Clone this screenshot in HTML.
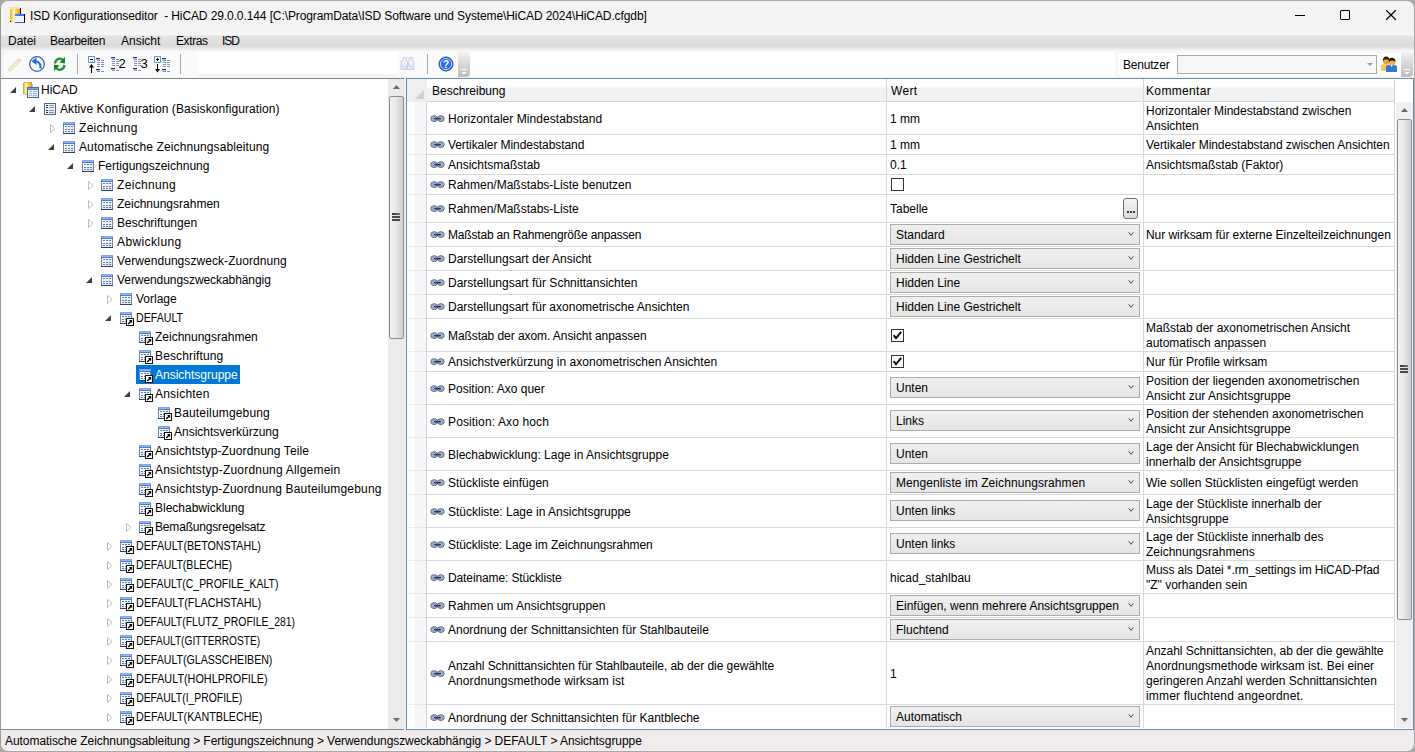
<!DOCTYPE html>
<html><head><meta charset="utf-8">
<style>
*{box-sizing:border-box;margin:0;padding:0}
html,body{width:1415px;height:752px;overflow:hidden;background:#a8a8a8}
body{font-family:"Liberation Sans",sans-serif;font-size:12px;color:#000;position:relative}
.a{position:absolute;display:block}
.t{position:absolute;white-space:nowrap;line-height:15px}
</style></head><body>
<svg width="0" height="0" style="position:absolute">
<defs>
 <linearGradient id="gTbl" x1="0" y1="0" x2="1" y2="1"><stop offset="0" stop-color="#ffffff"/><stop offset="1" stop-color="#d6e2f6"/></linearGradient>
 <linearGradient id="gHead" x1="0" y1="0" x2="0" y2="1"><stop offset="0" stop-color="#8db4f2"/><stop offset="1" stop-color="#3d6fd0"/></linearGradient>
 <linearGradient id="gCyl" x1="0" y1="0" x2="1" y2="0"><stop offset="0" stop-color="#e8b020"/><stop offset="0.35" stop-color="#fff2b0"/><stop offset="1" stop-color="#e49a00"/></linearGradient>
 <symbol id="tri-e" viewBox="0 0 6 6"><path d="M6 0 L6 6 L0 6 Z" fill="#404040" shape-rendering="geometricPrecision"/></symbol>
 <symbol id="tri-c" viewBox="0 0 6 9"><path d="M0.5 0.5 L5 4.5 L0.5 8.5 Z" fill="#fff" stroke="#b4b4b4" stroke-width="0.9" shape-rendering="geometricPrecision"/></symbol>
 <symbol id="ic-tbl" viewBox="0 0 15 15" shape-rendering="crispEdges">
  <rect x="0" y="0" width="12" height="12" fill="#6f86ae"/>
  <rect x="1" y="3" width="10" height="8" fill="url(#gTbl)"/>
  <rect x="0" y="0" width="12" height="3" fill="url(#gHead)"/>
  <rect x="1" y="1" width="10" height="1" fill="#9cc0f6" opacity="0.8"/>
  <rect x="0" y="11" width="12" height="1" fill="#2f4068"/>
  <g fill="#6a7a98"><rect x="2" y="4" width="2" height="1"/><rect x="5" y="4" width="2" height="1"/><rect x="8" y="4" width="2" height="1"/>
  <rect x="2" y="7" width="2" height="1"/><rect x="5" y="7" width="2" height="1"/><rect x="8" y="7" width="2" height="1"/>
  <rect x="2" y="9" width="2" height="1"/><rect x="5" y="9" width="2" height="1"/><rect x="8" y="9" width="2" height="1"/></g>
 </symbol>
 <symbol id="ic-lnk" viewBox="0 0 15 15" shape-rendering="crispEdges">
  <rect x="0" y="0" width="12" height="12" fill="#6f86ae"/>
  <rect x="1" y="3" width="10" height="8" fill="url(#gTbl)"/>
  <rect x="0" y="0" width="12" height="3" fill="url(#gHead)"/>
  <rect x="1" y="1" width="10" height="1" fill="#9cc0f6" opacity="0.8"/>
  <rect x="0" y="11" width="12" height="1" fill="#2f4068"/>
  <g fill="#6a7a98"><rect x="2" y="4" width="2" height="1"/><rect x="5" y="4" width="2" height="1"/><rect x="8" y="4" width="2" height="1"/>
  <rect x="2" y="7" width="2" height="1"/><rect x="5" y="7" width="2" height="1"/>
  <rect x="2" y="9" width="2" height="1"/><rect x="5" y="9" width="2" height="1"/></g>
  <rect x="6.5" y="6.5" width="7" height="7" rx="1" fill="#fff" stroke="#111"/>
  <path d="M8.2 12 L11 9.2" stroke="#000" stroke-width="1.4" fill="none" shape-rendering="geometricPrecision"/>
  <path d="M9 8 L12.2 8 L12.2 11.2 Z" fill="#000" shape-rendering="geometricPrecision"/>
 </symbol>
 <symbol id="ic-list" viewBox="0 0 15 15" shape-rendering="crispEdges">
  <rect x="0.5" y="0.5" width="11" height="11" fill="url(#gTbl)" stroke="#50678f"/>
  <g fill="#333"><rect x="2" y="2" width="2" height="1"/><rect x="2" y="4" width="2" height="1"/><rect x="2" y="7" width="2" height="1"/><rect x="2" y="9" width="2" height="1"/></g>
  <g fill="#8a8f99"><rect x="5" y="2" width="5" height="1"/><rect x="5" y="4" width="5" height="1"/><rect x="5" y="7" width="5" height="1"/><rect x="5" y="9" width="5" height="1"/></g>
 </symbol>
 <symbol id="ic-hicad" viewBox="0 0 17 17" shape-rendering="crispEdges">
  <rect x="0" y="0" width="9" height="12" rx="2" fill="url(#gCyl)" stroke="#c49a40" stroke-width="0.6"/>
  <rect x="4.5" y="5.5" width="11" height="10" fill="url(#gTbl)" stroke="#50678f"/>
  <rect x="5" y="6" width="10" height="2" fill="url(#gHead)"/>
  <g fill="#9db4e8"><rect x="6" y="9" width="3" height="1"/><rect x="10" y="9" width="4" height="1"/><rect x="6" y="11" width="3" height="1"/><rect x="10" y="11" width="4" height="1"/><rect x="6" y="13" width="3" height="1"/><rect x="10" y="13" width="4" height="1"/></g>
 </symbol>
 <symbol id="ic-link" viewBox="0 0 16 8">
  <g shape-rendering="geometricPrecision">
   <ellipse cx="4.2" cy="3.6" rx="3.4" ry="2.9" fill="#b7c5dc" stroke="#42577e" stroke-width="0.9"/>
   <ellipse cx="10.8" cy="3.6" rx="3.4" ry="2.9" fill="#b7c5dc" stroke="#42577e" stroke-width="0.9"/>
   <ellipse cx="4.4" cy="3.6" rx="1.8" ry="1.3" fill="#ffffff" stroke="#42577e" stroke-width="0.6"/>
   <ellipse cx="10.6" cy="3.6" rx="1.8" ry="1.3" fill="#ffffff" stroke="#42577e" stroke-width="0.6"/>
   <path d="M3.8 3.7 H11.2" stroke="#17274a" stroke-width="1.2"/>
  </g>
 </symbol>
 <symbol id="chev" viewBox="0 0 6 6"><path d="M0.7 1.3 L3 4.3 L5.3 1.3" fill="none" stroke="#4a4a4a" stroke-width="1.0" shape-rendering="geometricPrecision"/></symbol>
 <symbol id="check" viewBox="0 0 13 13"><path d="M2.6 6.2 L5 9.2 L10.2 2.8" fill="none" stroke="#111" stroke-width="2" shape-rendering="geometricPrecision"/></symbol>
</defs></svg>

<!-- window base -->
<div class="a" style="left:1px;top:1px;width:1413px;height:750px;background:#f3f3f3;border-radius:7px"></div>
<div class="a" style="left:0px;top:8px;width:1px;height:736px;background:#9a9a9a"></div>
<!-- title -->
<svg class="a" style="left:8px;top:5px" width="20" height="20" viewBox="0 0 20 20">
  <rect x="2" y="2" width="10" height="15" fill="url(#gCyl)"/>
  <rect x="2" y="2" width="10" height="2" fill="#f6e7a6"/>
  <rect x="5" y="4" width="2" height="12" fill="#fbf1b8" opacity="0.8"/>
  <rect x="12" y="3" width="1" height="6" fill="#111"/>
  <rect x="2" y="16" width="1" height="1" fill="#111"/>
  <rect x="7" y="9" width="10" height="9" fill="#eef2fb"/>
  <rect x="7" y="9" width="10" height="2" fill="#3f7ae6"/>
  <rect x="7" y="17" width="10" height="1" fill="#50648c"/>
  <rect x="16" y="9" width="1" height="9" fill="#000"/>
</svg>
<div class="t" style="left:30px;top:9px;letter-spacing:-0.1px">ISD Konfigurationseditor&nbsp; - HiCAD 29.0.0.144 [C:\ProgramData\ISD Software und Systeme\HiCAD 2024\HiCAD.cfgdb]</div>
<div class="a" style="left:1295px;top:15px;width:10px;height:1px;background:#000"></div>
<div class="a" style="left:1340px;top:10px;width:10px;height:10px;border:1px solid #000;border-radius:1px"></div>
<svg class="a" style="left:1385px;top:9px" width="12" height="12" viewBox="0 0 12 12"><path d="M1.2 1.2 L10.8 10.8 M10.8 1.2 L1.2 10.8" stroke="#000" stroke-width="1.25" shape-rendering="geometricPrecision"/></svg>
<!-- menu band -->
<div class="a" style="left:1px;top:31px;width:1413px;height:21px;background:linear-gradient(#f5f5f5 0,#f6f6f6 4px,#e4e3e3 5px,#e2e1e1 8px,#dcdbdb 15px,#e6e6e6 17px,#f6f6f6 20px,#fbfbfb 21px)"></div>
<div class="t" style="left:8px;top:34px">Datei</div>
<div class="t" style="left:50px;top:34px;letter-spacing:-0.3px">Bearbeiten</div>
<div class="t" style="left:121px;top:34px">Ansicht</div>
<div class="t" style="left:176px;top:34px;letter-spacing:-0.4px">Extras</div>
<div class="t" style="left:222px;top:34px;letter-spacing:-1px">ISD</div>
<!-- toolbar strip -->
<div class="a" style="left:1px;top:52px;width:1413px;height:26px;background:#f4f4f4"></div>
<div class="a" style="left:4px;top:52px;width:194px;height:25px;background:#fafafa;border-radius:5px 0 0 0"></div>
<div class="a" style="left:198px;top:52px;width:200px;height:22px;background:#fff"></div>
<div class="a" style="left:398px;top:52px;width:60px;height:25px;background:#fafafa"></div>
<div class="a" style="left:458px;top:52px;width:12px;height:25px;background:linear-gradient(#f2f2f2,#bcbcbc);border-radius:0 4px 4px 0"></div>
<div class="a" style="left:470px;top:52px;width:645px;height:25px;background:#fff"></div>
<div class="a" style="left:1115px;top:52px;width:286px;height:25px;background:#f6f6f6"></div>
<div class="a" style="left:1118px;top:53px;width:283px;height:23px;background:#fff;border-radius:4px 0 0 4px"></div>
<div class="a" style="left:1401px;top:52px;width:12px;height:25px;background:linear-gradient(#f2f2f2,#bcbcbc);border-radius:0 4px 4px 0"></div>
<div class="t" style="left:1123px;top:58px;letter-spacing:-0.2px">Benutzer</div>
<div class="a" style="left:1177px;top:55px;width:200px;height:19px;border:1px solid #ababab;background:#f7f7f7"></div>
<svg class="a" style="left:1367px;top:63px" width="6" height="3"><path d="M0 0 H6 L3 3 Z" fill="#a0a0a0"/></svg>
<svg class="a" style="left:0px;top:52px" width="200" height="26" viewBox="0 52 200 26" shape-rendering="crispEdges">
<g shape-rendering="geometricPrecision"><path d="M9 70 L8.2 71 L10 70.6 Z" fill="#bbb"/><path d="M8.6 70.4 L18.5 60.5 L20.5 62.5 L10.6 72.4 Z" transform="translate(-0.3,-1.2)" fill="#f5ecd2" stroke="#cfc8bc" stroke-width="0.8"/><circle cx="20" cy="60" r="1.6" fill="#f2d2d2"/></g>
<g shape-rendering="geometricPrecision"><circle cx="37" cy="64" r="7.3" fill="#fbfbf6" stroke="#3d62a8" stroke-width="1.3"/><path d="M40.5 68.5 C41 64 39 61.5 35.5 61.5" fill="none" stroke="#1f6ee0" stroke-width="2.2"/><path d="M31.5 61.2 L36.5 57.5 L36.5 65 Z" fill="#1f6ee0"/></g>
<g shape-rendering="geometricPrecision" fill="none" stroke="#1f9a2a" stroke-width="2.3"><path d="M55 63.5 C55.5 59 61 56.5 63.5 61"/><path d="M64.5 65 C64 69.5 58.5 72 56 67.5"/></g><g shape-rendering="geometricPrecision" fill="#0f8a1a"><path d="M65 57 L65 63.5 L59.5 62.5 Z"/><path d="M54 71 L54 64.5 L59.5 65.5 Z"/></g>
<rect x="77" y="54" width="1" height="20" fill="#a8a8a8"/>
<rect x="88.5" y="56.5" width="6" height="6" fill="#fff" stroke="#5b9be6" stroke-width="1.4"/><rect x="90" y="59" width="3" height="1" fill="#000"/><rect x="90" y="61" width="3" height="1" fill="#e6d070" opacity="0.6"/>
<rect x="91" y="65" width="1" height="8" fill="#000"/><path d="M89 67.5 L91.5 64 L94 67.5 Z" fill="#000" shape-rendering="geometricPrecision"/>
<rect x="96" y="58" width="4" height="1" fill="#222"/><rect x="96" y="57.5" width="4" height="2" fill="#555" opacity="0.35"/><rect x="96" y="69" width="4" height="1" fill="#222"/><rect x="96" y="68.5" width="4" height="2" fill="#555" opacity="0.35"/><rect x="97" y="60" width="2" height="1" fill="#8f8fd8"/><rect x="99" y="60" width="1" height="1" fill="#5aa59a"/><rect x="101" y="60" width="2" height="1" fill="#8f8fd8"/><rect x="103" y="60" width="1" height="1" fill="#5aa59a"/><rect x="97" y="62" width="2" height="1" fill="#8f8fd8"/><rect x="99" y="62" width="1" height="1" fill="#5aa59a"/><rect x="101" y="62" width="2" height="1" fill="#8f8fd8"/><rect x="103" y="62" width="1" height="1" fill="#5aa59a"/><rect x="97" y="64" width="2" height="1" fill="#8f8fd8"/><rect x="99" y="64" width="1" height="1" fill="#5aa59a"/><rect x="101" y="64" width="2" height="1" fill="#8f8fd8"/><rect x="103" y="64" width="1" height="1" fill="#5aa59a"/><rect x="97" y="66" width="2" height="1" fill="#8f8fd8"/><rect x="99" y="66" width="1" height="1" fill="#5aa59a"/><rect x="101" y="66" width="2" height="1" fill="#8f8fd8"/><rect x="103" y="66" width="1" height="1" fill="#5aa59a"/><rect x="97" y="71" width="2" height="1" fill="#8f8fd8"/><rect x="99" y="71" width="1" height="1" fill="#5aa59a"/><rect x="101" y="71" width="2" height="1" fill="#8f8fd8"/><rect x="103" y="71" width="1" height="1" fill="#5aa59a"/>
<rect x="111" y="57" width="4" height="1" fill="#222"/><rect x="111" y="56.5" width="4" height="2" fill="#555" opacity="0.35"/><rect x="111" y="68" width="4" height="1" fill="#222"/><rect x="111" y="67.5" width="4" height="2" fill="#555" opacity="0.35"/><rect x="112" y="59" width="2" height="1" fill="#8f8fd8"/><rect x="114" y="59" width="1" height="1" fill="#5aa59a"/><rect x="116" y="59" width="2" height="1" fill="#8f8fd8"/><rect x="118" y="59" width="1" height="1" fill="#5aa59a"/><rect x="112" y="61" width="2" height="1" fill="#8f8fd8"/><rect x="114" y="61" width="1" height="1" fill="#5aa59a"/><rect x="116" y="61" width="2" height="1" fill="#8f8fd8"/><rect x="118" y="61" width="1" height="1" fill="#5aa59a"/><rect x="112" y="63" width="2" height="1" fill="#8f8fd8"/><rect x="114" y="63" width="1" height="1" fill="#5aa59a"/><rect x="116" y="63" width="2" height="1" fill="#8f8fd8"/><rect x="118" y="63" width="1" height="1" fill="#5aa59a"/><rect x="112" y="65" width="2" height="1" fill="#8f8fd8"/><rect x="114" y="65" width="1" height="1" fill="#5aa59a"/><rect x="116" y="65" width="2" height="1" fill="#8f8fd8"/><rect x="118" y="65" width="1" height="1" fill="#5aa59a"/><rect x="112" y="70" width="2" height="1" fill="#8f8fd8"/><rect x="114" y="70" width="1" height="1" fill="#5aa59a"/><rect x="116" y="70" width="2" height="1" fill="#8f8fd8"/><rect x="118" y="70" width="1" height="1" fill="#5aa59a"/>
<text x="118.5" y="67.8" font-family="Liberation Sans" font-size="13" fill="#000" shape-rendering="geometricPrecision">2</text>
<rect x="133" y="57" width="4" height="1" fill="#222"/><rect x="133" y="56.5" width="4" height="2" fill="#555" opacity="0.35"/><rect x="133" y="68" width="4" height="1" fill="#222"/><rect x="133" y="67.5" width="4" height="2" fill="#555" opacity="0.35"/><rect x="134" y="59" width="2" height="1" fill="#8f8fd8"/><rect x="136" y="59" width="1" height="1" fill="#5aa59a"/><rect x="138" y="59" width="2" height="1" fill="#8f8fd8"/><rect x="140" y="59" width="1" height="1" fill="#5aa59a"/><rect x="134" y="61" width="2" height="1" fill="#8f8fd8"/><rect x="136" y="61" width="1" height="1" fill="#5aa59a"/><rect x="138" y="61" width="2" height="1" fill="#8f8fd8"/><rect x="140" y="61" width="1" height="1" fill="#5aa59a"/><rect x="134" y="63" width="2" height="1" fill="#8f8fd8"/><rect x="136" y="63" width="1" height="1" fill="#5aa59a"/><rect x="138" y="63" width="2" height="1" fill="#8f8fd8"/><rect x="140" y="63" width="1" height="1" fill="#5aa59a"/><rect x="134" y="65" width="2" height="1" fill="#8f8fd8"/><rect x="136" y="65" width="1" height="1" fill="#5aa59a"/><rect x="138" y="65" width="2" height="1" fill="#8f8fd8"/><rect x="140" y="65" width="1" height="1" fill="#5aa59a"/><rect x="134" y="70" width="2" height="1" fill="#8f8fd8"/><rect x="136" y="70" width="1" height="1" fill="#5aa59a"/><rect x="138" y="70" width="2" height="1" fill="#8f8fd8"/><rect x="140" y="70" width="1" height="1" fill="#5aa59a"/>
<text x="140.5" y="67.8" font-family="Liberation Sans" font-size="13" fill="#000">3</text>
<rect x="154.5" y="56.5" width="6" height="6" fill="#fff" stroke="#5b9be6" stroke-width="1.4"/><rect x="156" y="59" width="3" height="1" fill="#000"/><rect x="157" y="58" width="1" height="3" fill="#000"/>
<rect x="157" y="64" width="1" height="8" fill="#000"/><path d="M155 69 L157.5 72.5 L160 69 Z" fill="#000" shape-rendering="geometricPrecision"/>
<rect x="162" y="58" width="4" height="1" fill="#222"/><rect x="162" y="57.5" width="4" height="2" fill="#555" opacity="0.35"/><rect x="162" y="69" width="4" height="1" fill="#222"/><rect x="162" y="68.5" width="4" height="2" fill="#555" opacity="0.35"/><rect x="163" y="60" width="2" height="1" fill="#8f8fd8"/><rect x="165" y="60" width="1" height="1" fill="#5aa59a"/><rect x="167" y="60" width="2" height="1" fill="#8f8fd8"/><rect x="169" y="60" width="1" height="1" fill="#5aa59a"/><rect x="163" y="62" width="2" height="1" fill="#8f8fd8"/><rect x="165" y="62" width="1" height="1" fill="#5aa59a"/><rect x="167" y="62" width="2" height="1" fill="#8f8fd8"/><rect x="169" y="62" width="1" height="1" fill="#5aa59a"/><rect x="163" y="64" width="2" height="1" fill="#8f8fd8"/><rect x="165" y="64" width="1" height="1" fill="#5aa59a"/><rect x="167" y="64" width="2" height="1" fill="#8f8fd8"/><rect x="169" y="64" width="1" height="1" fill="#5aa59a"/><rect x="163" y="66" width="2" height="1" fill="#8f8fd8"/><rect x="165" y="66" width="1" height="1" fill="#5aa59a"/><rect x="167" y="66" width="2" height="1" fill="#8f8fd8"/><rect x="169" y="66" width="1" height="1" fill="#5aa59a"/><rect x="163" y="71" width="2" height="1" fill="#8f8fd8"/><rect x="165" y="71" width="1" height="1" fill="#5aa59a"/><rect x="167" y="71" width="2" height="1" fill="#8f8fd8"/><rect x="169" y="71" width="1" height="1" fill="#5aa59a"/>
<rect x="180" y="54" width="1" height="20" fill="#a8a8a8"/>
</svg>
<svg class="a" style="left:398px;top:52px" width="60" height="26" viewBox="398 52 60 26" shape-rendering="geometricPrecision"><g fill="#eef0f8" stroke="#c4cbe0" stroke-width="0.9"><path d="M403.5 57.5 h3 v3 l1 1 v8 h-6.5 v-7.5 l1.5 -1.5 z"/><path d="M409.5 57.5 h3 v3 l1.5 1.5 v7.5 h-6.5 v-8 l1 -1 z"/><rect x="407.5" y="62.5" width="1" height="3"/></g><g fill="#dde2f0"><rect x="402" y="65" width="5" height="4"/><rect x="409" y="65" width="5" height="4"/></g><rect x="427" y="54" width="1" height="20" fill="#a8a8a8" shape-rendering="crispEdges"/><circle cx="446" cy="64" r="7" fill="#1f5fd8" stroke="#2a4fa0" stroke-width="1"/><circle cx="446" cy="64" r="5.6" fill="none" stroke="#fff" stroke-width="0.8"/><circle cx="446" cy="63.5" r="5" fill="#2f7df0" opacity="0.6"/><text x="446" y="68" font-family="Liberation Sans" font-weight="bold" font-size="10" fill="#fff" text-anchor="middle">?</text></svg>
<svg class="a" style="left:458px;top:52px" width="12" height="26" viewBox="0 0 12 26"><rect x="3" y="17" width="6" height="1" fill="#fff" shape-rendering="crispEdges"/><path d="M3.5 20 L8.5 20 L6 22.5 Z" fill="#fff" shape-rendering="geometricPrecision"/></svg>
<svg class="a" style="left:1401px;top:52px" width="12" height="26" viewBox="0 0 12 26"><rect x="3" y="17" width="6" height="1" fill="#fff" shape-rendering="crispEdges"/><path d="M3.5 20 L8.5 20 L6 22.5 Z" fill="#fff" shape-rendering="geometricPrecision"/></svg>
<svg class="a" style="left:1381px;top:56px" width="17" height="17" viewBox="0 0 17 17" shape-rendering="geometricPrecision"><path d="M0 15 L0 10 Q0 8 3 8 L6 8 Q8 8 8 10 L8 15 Z" fill="#f2c85a"/><circle cx="5.2" cy="5" r="3.3" fill="#e8a838"/><path d="M1.8 5 Q2 0.2 5.5 0.5 Q8.8 1 8.4 4.5 Q6 2.5 3.5 3.5 Q2.5 4.5 1.8 5Z" fill="#2a1a08"/><path d="M5 16 L5 11 Q5 9 8 9 L13 9 Q16 9 16 11 L16 16 Z" fill="#2f7ad8"/><circle cx="11" cy="6.5" r="3.3" fill="#f0b048"/><path d="M7.6 6.5 Q7.6 1.5 11 1.8 Q14.6 2 14.4 6 Q12 4 9.5 4.8 Q8.3 5.5 7.6 6.5Z" fill="#1e1206"/><path d="M9.5 9 L10.5 11 L11.5 9 Z" fill="#fff"/></svg>
<!-- tree panel -->
<div class="a" style="left:1px;top:78px;width:403px;height:652px;background:#fff;border-top:1px solid #838790;border-bottom:1px solid #838790"></div>
<!-- tree scrollbar -->
<div class="a" style="left:388px;top:79px;width:16px;height:650px;background:#ebebeb"></div>
<svg class="a" style="left:393px;top:85px" width="7" height="4" viewBox="0 0 7 4"><path d="M0 4 L3.5 0 L7 4 Z" fill="#6a6a6a" shape-rendering="geometricPrecision"/></svg>
<svg class="a" style="left:393px;top:718px" width="7" height="4" viewBox="0 0 7 4"><path d="M0 0 L7 0 L3.5 4 Z" fill="#6a6a6a" shape-rendering="geometricPrecision"/></svg>
<div class="a" style="left:389px;top:96px;width:15px;height:243px;border:1px solid #8c8c8c;border-radius:2px;background:linear-gradient(90deg,#f4f4f4,#e8e8e8 45%,#cfcfcf)"></div>
<div class="a" style="left:392px;top:213px;width:8px;height:2px;background:linear-gradient(90deg,#333,#777);box-shadow:0 3px 0 #4a4a4a,0 6px 0 #4a4a4a"></div>
<svg class="a" style="left:10px;top:87px" width="6" height="6"><use href="#tri-e"/></svg>
<svg class="a" style="left:23px;top:82px" width="17" height="17"><use href="#ic-hicad"/></svg>
<div class="t" style="left:41px;top:83px;color:#000">HiCAD</div>
<svg class="a" style="left:29px;top:106px" width="6" height="6"><use href="#tri-e"/></svg>
<svg class="a" style="left:44px;top:103px" width="15" height="15"><use href="#ic-list"/></svg>
<div class="t" style="left:60px;top:102px;color:#000;letter-spacing:0.085px">Aktive Konfiguration (Basiskonfiguration)</div>
<svg class="a" style="left:50px;top:124px" width="6" height="9"><use href="#tri-c"/></svg>
<svg class="a" style="left:63px;top:122px" width="15" height="15"><use href="#ic-tbl"/></svg>
<div class="t" style="left:79px;top:121px;color:#000;letter-spacing:0.300px">Zeichnung</div>
<svg class="a" style="left:48px;top:144px" width="6" height="6"><use href="#tri-e"/></svg>
<svg class="a" style="left:63px;top:141px" width="15" height="15"><use href="#ic-tbl"/></svg>
<div class="t" style="left:79px;top:140px;color:#000;letter-spacing:0.113px">Automatische Zeichnungsableitung</div>
<svg class="a" style="left:67px;top:163px" width="6" height="6"><use href="#tri-e"/></svg>
<svg class="a" style="left:82px;top:160px" width="15" height="15"><use href="#ic-tbl"/></svg>
<div class="t" style="left:98px;top:159px;color:#000">Fertigungszeichnung</div>
<svg class="a" style="left:88px;top:181px" width="6" height="9"><use href="#tri-c"/></svg>
<svg class="a" style="left:101px;top:179px" width="15" height="15"><use href="#ic-tbl"/></svg>
<div class="t" style="left:117px;top:178px;color:#000;letter-spacing:0.325px">Zeichnung</div>
<svg class="a" style="left:88px;top:200px" width="6" height="9"><use href="#tri-c"/></svg>
<svg class="a" style="left:101px;top:198px" width="15" height="15"><use href="#ic-tbl"/></svg>
<div class="t" style="left:117px;top:197px;color:#000">Zeichnungsrahmen</div>
<svg class="a" style="left:88px;top:219px" width="6" height="9"><use href="#tri-c"/></svg>
<svg class="a" style="left:101px;top:217px" width="15" height="15"><use href="#ic-tbl"/></svg>
<div class="t" style="left:117px;top:216px;color:#000">Beschriftungen</div>
<svg class="a" style="left:101px;top:236px" width="15" height="15"><use href="#ic-tbl"/></svg>
<div class="t" style="left:117px;top:235px;color:#000;letter-spacing:0.389px">Abwicklung</div>
<svg class="a" style="left:101px;top:255px" width="15" height="15"><use href="#ic-tbl"/></svg>
<div class="t" style="left:117px;top:254px;color:#000;letter-spacing:0.064px">Verwendungszweck-Zuordnung</div>
<svg class="a" style="left:86px;top:277px" width="6" height="6"><use href="#tri-e"/></svg>
<svg class="a" style="left:101px;top:274px" width="15" height="15"><use href="#ic-tbl"/></svg>
<div class="t" style="left:117px;top:273px;color:#000;letter-spacing:-0.070px">Verwendungszweckabhängig</div>
<svg class="a" style="left:107px;top:295px" width="6" height="9"><use href="#tri-c"/></svg>
<svg class="a" style="left:120px;top:293px" width="15" height="15"><use href="#ic-tbl"/></svg>
<div class="t" style="left:136px;top:292px;color:#000">Vorlage</div>
<svg class="a" style="left:105px;top:315px" width="6" height="6"><use href="#tri-e"/></svg>
<svg class="a" style="left:120px;top:312px" width="15" height="15"><use href="#ic-lnk"/></svg>
<div class="t" style="left:136px;top:311px;color:#000;transform:scaleX(0.8843);transform-origin:137px 0 0;transform-origin:1px 0">DEFAULT</div>
<svg class="a" style="left:139px;top:331px" width="15" height="15"><use href="#ic-lnk"/></svg>
<div class="t" style="left:155px;top:330px;color:#000">Zeichnungsrahmen</div>
<svg class="a" style="left:139px;top:350px" width="15" height="15"><use href="#ic-lnk"/></svg>
<div class="t" style="left:155px;top:349px;color:#000;letter-spacing:0.145px">Beschriftung</div>
<div class="a" style="left:136px;top:365px;width:104px;height:19px;background:#0078d7"></div>
<svg class="a" style="left:139px;top:369px" width="15" height="15"><use href="#ic-lnk"/></svg>
<div class="t" style="left:155px;top:368px;color:#fff">Ansichtsgruppe</div>
<svg class="a" style="left:124px;top:391px" width="6" height="6"><use href="#tri-e"/></svg>
<svg class="a" style="left:139px;top:388px" width="15" height="15"><use href="#ic-lnk"/></svg>
<div class="t" style="left:155px;top:387px;color:#000;letter-spacing:0.212px">Ansichten</div>
<svg class="a" style="left:158px;top:407px" width="15" height="15"><use href="#ic-lnk"/></svg>
<div class="t" style="left:174px;top:406px;color:#000;letter-spacing:0.171px">Bauteilumgebung</div>
<svg class="a" style="left:158px;top:426px" width="15" height="15"><use href="#ic-lnk"/></svg>
<div class="t" style="left:174px;top:425px;color:#000">Ansichtsverkürzung</div>
<svg class="a" style="left:139px;top:445px" width="15" height="15"><use href="#ic-lnk"/></svg>
<div class="t" style="left:155px;top:444px;color:#000;letter-spacing:0.104px">Ansichtstyp-Zuordnung Teile</div>
<svg class="a" style="left:139px;top:464px" width="15" height="15"><use href="#ic-lnk"/></svg>
<div class="t" style="left:155px;top:463px;color:#000;letter-spacing:0.210px">Ansichtstyp-Zuordnung Allgemein</div>
<svg class="a" style="left:139px;top:483px" width="15" height="15"><use href="#ic-lnk"/></svg>
<div class="t" style="left:155px;top:482px;color:#000;letter-spacing:0.175px">Ansichtstyp-Zuordnung Bauteilumgebung</div>
<svg class="a" style="left:139px;top:502px" width="15" height="15"><use href="#ic-lnk"/></svg>
<div class="t" style="left:155px;top:501px;color:#000">Blechabwicklung</div>
<svg class="a" style="left:126px;top:523px" width="6" height="9"><use href="#tri-c"/></svg>
<svg class="a" style="left:139px;top:521px" width="15" height="15"><use href="#ic-lnk"/></svg>
<div class="t" style="left:155px;top:520px;color:#000;letter-spacing:-0.176px">Bemaßungsregelsatz</div>
<svg class="a" style="left:107px;top:542px" width="6" height="9"><use href="#tri-c"/></svg>
<svg class="a" style="left:120px;top:540px" width="15" height="15"><use href="#ic-lnk"/></svg>
<div class="t" style="left:136px;top:539px;color:#000;transform:scaleX(0.8898);transform-origin:137px 0 0;transform-origin:1px 0">DEFAULT(BETONSTAHL)</div>
<svg class="a" style="left:107px;top:561px" width="6" height="9"><use href="#tri-c"/></svg>
<svg class="a" style="left:120px;top:559px" width="15" height="15"><use href="#ic-lnk"/></svg>
<div class="t" style="left:136px;top:558px;color:#000;transform:scaleX(0.8794);transform-origin:137px 0 0;transform-origin:1px 0">DEFAULT(BLECHE)</div>
<svg class="a" style="left:107px;top:580px" width="6" height="9"><use href="#tri-c"/></svg>
<svg class="a" style="left:120px;top:578px" width="15" height="15"><use href="#ic-lnk"/></svg>
<div class="t" style="left:136px;top:577px;color:#000;transform:scaleX(0.8696);transform-origin:137px 0 0;transform-origin:1px 0">DEFAULT(C_PROFILE_KALT)</div>
<svg class="a" style="left:107px;top:599px" width="6" height="9"><use href="#tri-c"/></svg>
<svg class="a" style="left:120px;top:597px" width="15" height="15"><use href="#ic-lnk"/></svg>
<div class="t" style="left:136px;top:596px;color:#000;transform:scaleX(0.9044);transform-origin:137px 0 0;transform-origin:1px 0">DEFAULT(FLACHSTAHL)</div>
<svg class="a" style="left:107px;top:618px" width="6" height="9"><use href="#tri-c"/></svg>
<svg class="a" style="left:120px;top:616px" width="15" height="15"><use href="#ic-lnk"/></svg>
<div class="t" style="left:136px;top:615px;color:#000;transform:scaleX(0.8674);transform-origin:137px 0 0;transform-origin:1px 0">DEFAULT(FLUTZ_PROFILE_281)</div>
<svg class="a" style="left:107px;top:637px" width="6" height="9"><use href="#tri-c"/></svg>
<svg class="a" style="left:120px;top:635px" width="15" height="15"><use href="#ic-lnk"/></svg>
<div class="t" style="left:136px;top:634px;color:#000;transform:scaleX(0.8465);transform-origin:137px 0 0;transform-origin:1px 0">DEFAULT(GITTERROSTE)</div>
<svg class="a" style="left:107px;top:656px" width="6" height="9"><use href="#tri-c"/></svg>
<svg class="a" style="left:120px;top:654px" width="15" height="15"><use href="#ic-lnk"/></svg>
<div class="t" style="left:136px;top:653px;color:#000;transform:scaleX(0.8822);transform-origin:137px 0 0;transform-origin:1px 0">DEFAULT(GLASSCHEIBEN)</div>
<svg class="a" style="left:107px;top:675px" width="6" height="9"><use href="#tri-c"/></svg>
<svg class="a" style="left:120px;top:673px" width="15" height="15"><use href="#ic-lnk"/></svg>
<div class="t" style="left:136px;top:672px;color:#000;transform:scaleX(0.9021);transform-origin:137px 0 0;transform-origin:1px 0">DEFAULT(HOHLPROFILE)</div>
<svg class="a" style="left:107px;top:694px" width="6" height="9"><use href="#tri-c"/></svg>
<svg class="a" style="left:120px;top:692px" width="15" height="15"><use href="#ic-lnk"/></svg>
<div class="t" style="left:136px;top:691px;color:#000;transform:scaleX(0.8667);transform-origin:137px 0 0;transform-origin:1px 0">DEFAULT(I_PROFILE)</div>
<svg class="a" style="left:107px;top:713px" width="6" height="9"><use href="#tri-c"/></svg>
<svg class="a" style="left:120px;top:711px" width="15" height="15"><use href="#ic-lnk"/></svg>
<div class="t" style="left:136px;top:710px;color:#000;transform:scaleX(0.8935);transform-origin:137px 0 0;transform-origin:1px 0">DEFAULT(KANTBLECHE)</div>
<!-- splitter -->
<div class="a" style="left:404px;top:78px;width:2px;height:652px;background:#f0f0f0"></div>
<!-- grid panel -->
<div class="a" style="left:406px;top:78px;width:1008px;height:652px;background:#fff;border:1px solid #6b8db5"></div>
<!-- header -->
<div class="a" style="left:427px;top:79px;width:968px;height:22px;background:linear-gradient(#ffffff 0,#ffffff 8px,#f1f2f4 9px,#f1f2f4 22px)"></div>
<div class="a" style="left:407px;top:101px;width:988px;height:1px;background:#d5d5d5"></div>
<div class="a" style="left:407px;top:79px;width:20px;height:23px;background:#efefef"></div>
<svg class="a" style="left:415px;top:90px" width="9" height="9"><path d="M9 0 L9 9 L0 9 Z" fill="#d2d2d2"/></svg>
<div class="a" style="left:415px;top:102px;width:11px;height:626px;background:#f4f6f8"></div>
<div class="a" style="left:426px;top:102px;width:1px;height:626px;background:#d5d5d5"></div>
<div class="a" style="left:886px;top:79px;width:1px;height:649px;background:#d9d9d9"></div>
<div class="a" style="left:1143px;top:79px;width:1px;height:649px;background:#d9d9d9"></div>
<div class="a" style="left:1394px;top:79px;width:1px;height:649px;background:#d9d9d9"></div>
<div class="t" style="left:432px;top:84px">Beschreibung</div>
<div class="t" style="left:891px;top:84px;letter-spacing:0.3px">Wert</div>
<div class="t" style="left:1146px;top:84px;letter-spacing:0.35px">Kommentar</div>
<div class="a" style="left:408px;top:134px;width:18px;height:1px;background:linear-gradient(90deg,#f2f2f2,#e2e2e2)"></div>
<div class="a" style="left:427px;top:134px;width:968px;height:1px;background:#d9d9d9"></div>
<div class="a" style="left:408px;top:154px;width:18px;height:1px;background:linear-gradient(90deg,#f2f2f2,#e2e2e2)"></div>
<div class="a" style="left:427px;top:154px;width:968px;height:1px;background:#d9d9d9"></div>
<div class="a" style="left:408px;top:174px;width:18px;height:1px;background:linear-gradient(90deg,#f2f2f2,#e2e2e2)"></div>
<div class="a" style="left:427px;top:174px;width:968px;height:1px;background:#d9d9d9"></div>
<div class="a" style="left:408px;top:194px;width:18px;height:1px;background:linear-gradient(90deg,#f2f2f2,#e2e2e2)"></div>
<div class="a" style="left:427px;top:194px;width:968px;height:1px;background:#d9d9d9"></div>
<div class="a" style="left:408px;top:222px;width:18px;height:1px;background:linear-gradient(90deg,#f2f2f2,#e2e2e2)"></div>
<div class="a" style="left:427px;top:222px;width:968px;height:1px;background:#d9d9d9"></div>
<div class="a" style="left:408px;top:246px;width:18px;height:1px;background:linear-gradient(90deg,#f2f2f2,#e2e2e2)"></div>
<div class="a" style="left:427px;top:246px;width:968px;height:1px;background:#d9d9d9"></div>
<div class="a" style="left:408px;top:270px;width:18px;height:1px;background:linear-gradient(90deg,#f2f2f2,#e2e2e2)"></div>
<div class="a" style="left:427px;top:270px;width:968px;height:1px;background:#d9d9d9"></div>
<div class="a" style="left:408px;top:294px;width:18px;height:1px;background:linear-gradient(90deg,#f2f2f2,#e2e2e2)"></div>
<div class="a" style="left:427px;top:294px;width:968px;height:1px;background:#d9d9d9"></div>
<div class="a" style="left:408px;top:318px;width:18px;height:1px;background:linear-gradient(90deg,#f2f2f2,#e2e2e2)"></div>
<div class="a" style="left:427px;top:318px;width:968px;height:1px;background:#d9d9d9"></div>
<div class="a" style="left:408px;top:351px;width:18px;height:1px;background:linear-gradient(90deg,#f2f2f2,#e2e2e2)"></div>
<div class="a" style="left:427px;top:351px;width:968px;height:1px;background:#d9d9d9"></div>
<div class="a" style="left:408px;top:371px;width:18px;height:1px;background:linear-gradient(90deg,#f2f2f2,#e2e2e2)"></div>
<div class="a" style="left:427px;top:371px;width:968px;height:1px;background:#d9d9d9"></div>
<div class="a" style="left:408px;top:404px;width:18px;height:1px;background:linear-gradient(90deg,#f2f2f2,#e2e2e2)"></div>
<div class="a" style="left:427px;top:404px;width:968px;height:1px;background:#d9d9d9"></div>
<div class="a" style="left:408px;top:437px;width:18px;height:1px;background:linear-gradient(90deg,#f2f2f2,#e2e2e2)"></div>
<div class="a" style="left:427px;top:437px;width:968px;height:1px;background:#d9d9d9"></div>
<div class="a" style="left:408px;top:470px;width:18px;height:1px;background:linear-gradient(90deg,#f2f2f2,#e2e2e2)"></div>
<div class="a" style="left:427px;top:470px;width:968px;height:1px;background:#d9d9d9"></div>
<div class="a" style="left:408px;top:494px;width:18px;height:1px;background:linear-gradient(90deg,#f2f2f2,#e2e2e2)"></div>
<div class="a" style="left:427px;top:494px;width:968px;height:1px;background:#d9d9d9"></div>
<div class="a" style="left:408px;top:527px;width:18px;height:1px;background:linear-gradient(90deg,#f2f2f2,#e2e2e2)"></div>
<div class="a" style="left:427px;top:527px;width:968px;height:1px;background:#d9d9d9"></div>
<div class="a" style="left:408px;top:560px;width:18px;height:1px;background:linear-gradient(90deg,#f2f2f2,#e2e2e2)"></div>
<div class="a" style="left:427px;top:560px;width:968px;height:1px;background:#d9d9d9"></div>
<div class="a" style="left:408px;top:593px;width:18px;height:1px;background:linear-gradient(90deg,#f2f2f2,#e2e2e2)"></div>
<div class="a" style="left:427px;top:593px;width:968px;height:1px;background:#d9d9d9"></div>
<div class="a" style="left:408px;top:617px;width:18px;height:1px;background:linear-gradient(90deg,#f2f2f2,#e2e2e2)"></div>
<div class="a" style="left:427px;top:617px;width:968px;height:1px;background:#d9d9d9"></div>
<div class="a" style="left:408px;top:641px;width:18px;height:1px;background:linear-gradient(90deg,#f2f2f2,#e2e2e2)"></div>
<div class="a" style="left:427px;top:641px;width:968px;height:1px;background:#d9d9d9"></div>
<div class="a" style="left:408px;top:704px;width:18px;height:1px;background:linear-gradient(90deg,#f2f2f2,#e2e2e2)"></div>
<div class="a" style="left:427px;top:704px;width:968px;height:1px;background:#d9d9d9"></div>
<svg class="a" style="left:430px;top:115px" width="16" height="8"><use href="#ic-link"/></svg>
<div class="t" style="left:448px;top:112px;letter-spacing:0.058px">Horizontaler Mindestabstand</div>
<div class="t" style="left:1146px;top:104px">Horizontaler Mindestabstand zwischen</div>
<div class="t" style="left:1146px;top:119px">Ansichten</div>
<div class="t" style="left:890px;top:112px">1 mm</div>
<svg class="a" style="left:430px;top:141px" width="16" height="8"><use href="#ic-link"/></svg>
<div class="t" style="left:448px;top:138px;letter-spacing:-0.071px">Vertikaler Mindestabstand</div>
<div class="t" style="left:1146px;top:138px;letter-spacing:-0.060px">Vertikaler Mindestabstand zwischen Ansichten</div>
<div class="t" style="left:890px;top:138px">1 mm</div>
<svg class="a" style="left:430px;top:161px" width="16" height="8"><use href="#ic-link"/></svg>
<div class="t" style="left:448px;top:158px">Ansichtsmaßstab</div>
<div class="t" style="left:1146px;top:158px">Ansichtsmaßstab (Faktor)</div>
<div class="t" style="left:890px;top:158px">0.1</div>
<svg class="a" style="left:430px;top:181px" width="16" height="8"><use href="#ic-link"/></svg>
<div class="t" style="left:448px;top:178px">Rahmen/Maßstabs-Liste benutzen</div>
<div class="a" style="left:891px;top:178px;width:13px;height:13px;border:1px solid #333;background:#fff"></div>
<svg class="a" style="left:430px;top:205px" width="16" height="8"><use href="#ic-link"/></svg>
<div class="t" style="left:448px;top:202px">Rahmen/Maßstabs-Liste</div>
<div class="t" style="left:890px;top:202px">Tabelle</div>
<div class="a" style="left:1123px;top:198px;width:15px;height:21px;border:1px solid #707070;border-radius:3px;background:linear-gradient(#f4f4f4,#dcdcdc)"></div>
<div class="a" style="left:1127px;top:211px;width:2px;height:2px;background:#3a3a3a"></div>
<div class="a" style="left:1130px;top:211px;width:2px;height:2px;background:#3a3a3a"></div>
<div class="a" style="left:1133px;top:211px;width:2px;height:2px;background:#3a3a3a"></div>
<svg class="a" style="left:430px;top:231px" width="16" height="8"><use href="#ic-link"/></svg>
<div class="t" style="left:448px;top:228px;letter-spacing:-0.177px">Maßstab an Rahmengröße anpassen</div>
<div class="t" style="left:1146px;top:228px;letter-spacing:-0.045px">Nur wirksam für externe Einzelteilzeichnungen</div>
<div class="a" style="left:890px;top:224px;width:250px;height:21px;border:1px solid #acacac;background:linear-gradient(#f0f0f0,#e5e5e5)"></div>
<div class="t" style="left:896px;top:228px">Standard</div>
<svg class="a" style="left:1128px;top:231px" width="6" height="6"><use href="#chev"/></svg>
<svg class="a" style="left:430px;top:255px" width="16" height="8"><use href="#ic-link"/></svg>
<div class="t" style="left:448px;top:252px">Darstellungsart der Ansicht</div>
<div class="a" style="left:890px;top:248px;width:250px;height:21px;border:1px solid #acacac;background:linear-gradient(#f0f0f0,#e5e5e5)"></div>
<div class="t" style="left:896px;top:252px">Hidden Line Gestrichelt</div>
<svg class="a" style="left:1128px;top:255px" width="6" height="6"><use href="#chev"/></svg>
<svg class="a" style="left:430px;top:279px" width="16" height="8"><use href="#ic-link"/></svg>
<div class="t" style="left:448px;top:276px">Darstellungsart für Schnittansichten</div>
<div class="a" style="left:890px;top:272px;width:250px;height:21px;border:1px solid #acacac;background:linear-gradient(#f0f0f0,#e5e5e5)"></div>
<div class="t" style="left:896px;top:276px">Hidden Line</div>
<svg class="a" style="left:1128px;top:279px" width="6" height="6"><use href="#chev"/></svg>
<svg class="a" style="left:430px;top:303px" width="16" height="8"><use href="#ic-link"/></svg>
<div class="t" style="left:448px;top:300px">Darstellungsart für axonometrische Ansichten</div>
<div class="a" style="left:890px;top:296px;width:250px;height:21px;border:1px solid #acacac;background:linear-gradient(#f0f0f0,#e5e5e5)"></div>
<div class="t" style="left:896px;top:300px">Hidden Line Gestrichelt</div>
<svg class="a" style="left:1128px;top:303px" width="6" height="6"><use href="#chev"/></svg>
<svg class="a" style="left:430px;top:332px" width="16" height="8"><use href="#ic-link"/></svg>
<div class="t" style="left:448px;top:329px;letter-spacing:-0.067px">Maßstab der axom. Ansicht anpassen</div>
<div class="t" style="left:1146px;top:321px">Maßstab der axonometrischen Ansicht</div>
<div class="t" style="left:1146px;top:336px">automatisch anpassen</div>
<div class="a" style="left:891px;top:329px;width:13px;height:13px;border:1px solid #333;background:#fff"></div>
<svg class="a" style="left:891px;top:329px" width="13" height="13"><use href="#check"/></svg>
<svg class="a" style="left:430px;top:358px" width="16" height="8"><use href="#ic-link"/></svg>
<div class="t" style="left:448px;top:355px;letter-spacing:0.035px">Ansichstverkürzung in axonometrischen Ansichten</div>
<div class="t" style="left:1146px;top:355px">Nur für Profile wirksam</div>
<div class="a" style="left:891px;top:355px;width:13px;height:13px;border:1px solid #333;background:#fff"></div>
<svg class="a" style="left:891px;top:355px" width="13" height="13"><use href="#check"/></svg>
<svg class="a" style="left:430px;top:385px" width="16" height="8"><use href="#ic-link"/></svg>
<div class="t" style="left:448px;top:382px">Position: Axo quer</div>
<div class="t" style="left:1146px;top:374px">Position der liegenden axonometrischen</div>
<div class="t" style="left:1146px;top:389px">Ansicht zur Ansichtsgruppe</div>
<div class="a" style="left:890px;top:377px;width:250px;height:21px;border:1px solid #acacac;background:linear-gradient(#f0f0f0,#e5e5e5)"></div>
<div class="t" style="left:896px;top:381px">Unten</div>
<svg class="a" style="left:1128px;top:384px" width="6" height="6"><use href="#chev"/></svg>
<svg class="a" style="left:430px;top:418px" width="16" height="8"><use href="#ic-link"/></svg>
<div class="t" style="left:448px;top:415px;letter-spacing:0.129px">Position: Axo hoch</div>
<div class="t" style="left:1146px;top:407px">Position der stehenden axonometrischen</div>
<div class="t" style="left:1146px;top:422px">Ansicht zur Ansichtsgruppe</div>
<div class="a" style="left:890px;top:410px;width:250px;height:21px;border:1px solid #acacac;background:linear-gradient(#f0f0f0,#e5e5e5)"></div>
<div class="t" style="left:896px;top:414px">Links</div>
<svg class="a" style="left:1128px;top:417px" width="6" height="6"><use href="#chev"/></svg>
<svg class="a" style="left:430px;top:451px" width="16" height="8"><use href="#ic-link"/></svg>
<div class="t" style="left:448px;top:448px">Blechabwicklung: Lage in Ansichtsgruppe</div>
<div class="t" style="left:1146px;top:440px">Lage der Ansicht für Blechabwicklungen</div>
<div class="t" style="left:1146px;top:455px">innerhalb der Ansichtsgruppe</div>
<div class="a" style="left:890px;top:443px;width:250px;height:21px;border:1px solid #acacac;background:linear-gradient(#f0f0f0,#e5e5e5)"></div>
<div class="t" style="left:896px;top:447px">Unten</div>
<svg class="a" style="left:1128px;top:450px" width="6" height="6"><use href="#chev"/></svg>
<svg class="a" style="left:430px;top:479px" width="16" height="8"><use href="#ic-link"/></svg>
<div class="t" style="left:448px;top:476px">Stückliste einfügen</div>
<div class="t" style="left:1146px;top:476px">Wie sollen Stücklisten eingefügt werden</div>
<div class="a" style="left:890px;top:472px;width:250px;height:21px;border:1px solid #acacac;background:linear-gradient(#f0f0f0,#e5e5e5)"></div>
<div class="t" style="left:896px;top:476px;letter-spacing:0.077px">Mengenliste im Zeichnungsrahmen</div>
<svg class="a" style="left:1128px;top:479px" width="6" height="6"><use href="#chev"/></svg>
<svg class="a" style="left:430px;top:508px" width="16" height="8"><use href="#ic-link"/></svg>
<div class="t" style="left:448px;top:505px">Stückliste: Lage in Ansichtsgruppe</div>
<div class="t" style="left:1146px;top:497px">Lage der Stückliste innerhalb der</div>
<div class="t" style="left:1146px;top:512px">Ansichtsgruppe</div>
<div class="a" style="left:890px;top:500px;width:250px;height:21px;border:1px solid #acacac;background:linear-gradient(#f0f0f0,#e5e5e5)"></div>
<div class="t" style="left:896px;top:504px">Unten links</div>
<svg class="a" style="left:1128px;top:507px" width="6" height="6"><use href="#chev"/></svg>
<svg class="a" style="left:430px;top:541px" width="16" height="8"><use href="#ic-link"/></svg>
<div class="t" style="left:448px;top:538px;letter-spacing:-0.057px">Stückliste: Lage im Zeichnungsrahmen</div>
<div class="t" style="left:1146px;top:530px">Lage der Stückliste innerhalb des</div>
<div class="t" style="left:1146px;top:545px">Zeichnungsrahmens</div>
<div class="a" style="left:890px;top:533px;width:250px;height:21px;border:1px solid #acacac;background:linear-gradient(#f0f0f0,#e5e5e5)"></div>
<div class="t" style="left:896px;top:537px">Unten links</div>
<svg class="a" style="left:1128px;top:540px" width="6" height="6"><use href="#chev"/></svg>
<svg class="a" style="left:430px;top:574px" width="16" height="8"><use href="#ic-link"/></svg>
<div class="t" style="left:448px;top:571px;letter-spacing:-0.115px">Dateiname: Stückliste</div>
<div class="t" style="left:1146px;top:563px;letter-spacing:-0.080px">Muss als Datei *.rm_settings im HiCAD-Pfad</div>
<div class="t" style="left:1146px;top:578px">&quot;Z&quot; vorhanden sein</div>
<div class="t" style="left:890px;top:571px">hicad_stahlbau</div>
<svg class="a" style="left:430px;top:602px" width="16" height="8"><use href="#ic-link"/></svg>
<div class="t" style="left:448px;top:599px">Rahmen um Ansichtsgruppen</div>
<div class="a" style="left:890px;top:595px;width:250px;height:21px;border:1px solid #acacac;background:linear-gradient(#f0f0f0,#e5e5e5)"></div>
<div class="t" style="left:896px;top:599px">Einfügen, wenn mehrere Ansichtsgruppen</div>
<svg class="a" style="left:1128px;top:602px" width="6" height="6"><use href="#chev"/></svg>
<svg class="a" style="left:430px;top:626px" width="16" height="8"><use href="#ic-link"/></svg>
<div class="t" style="left:448px;top:623px">Anordnung der Schnittansichten für Stahlbauteile</div>
<div class="a" style="left:890px;top:619px;width:250px;height:21px;border:1px solid #acacac;background:linear-gradient(#f0f0f0,#e5e5e5)"></div>
<div class="t" style="left:896px;top:623px">Fluchtend</div>
<svg class="a" style="left:1128px;top:626px" width="6" height="6"><use href="#chev"/></svg>
<svg class="a" style="left:430px;top:670px" width="16" height="8"><use href="#ic-link"/></svg>
<div class="t" style="left:448px;top:659px;letter-spacing:-0.054px">Anzahl Schnittansichten für Stahlbauteile, ab der die gewählte</div>
<div class="t" style="left:448px;top:674px;letter-spacing:0.082px">Anordnungsmethode wirksam ist</div>
<div class="t" style="left:1146px;top:644px;letter-spacing:-0.047px">Anzahl Schnittansichten, ab der die gewählte</div>
<div class="t" style="left:1146px;top:659px">Anordnungsmethode wirksam ist. Bei einer</div>
<div class="t" style="left:1146px;top:674px">geringeren Anzahl werden Schnittansichten</div>
<div class="t" style="left:1146px;top:689px;letter-spacing:0.177px">immer fluchtend angeordnet.</div>
<div class="t" style="left:890px;top:667px">1</div>
<svg class="a" style="left:430px;top:714px" width="16" height="8"><use href="#ic-link"/></svg>
<div class="t" style="left:448px;top:711px">Anordnung der Schnittansichten für Kantbleche</div>
<div class="a" style="left:890px;top:706px;width:250px;height:21px;border:1px solid #acacac;background:linear-gradient(#f0f0f0,#e5e5e5)"></div>
<div class="t" style="left:896px;top:710px">Automatisch</div>
<svg class="a" style="left:1128px;top:713px" width="6" height="6"><use href="#chev"/></svg>
<!-- grid scrollbar -->
<div class="a" style="left:1396px;top:102px;width:17px;height:626px;background:#f0f0f0"></div>
<svg class="a" style="left:1401px;top:108px" width="7" height="4" viewBox="0 0 7 4"><path d="M0 4 L3.5 0 L7 4 Z" fill="#6a6a6a" shape-rendering="geometricPrecision"/></svg>
<svg class="a" style="left:1401px;top:718px" width="7" height="4" viewBox="0 0 7 4"><path d="M0 0 L7 0 L3.5 4 Z" fill="#6a6a6a" shape-rendering="geometricPrecision"/></svg>
<div class="a" style="left:1397px;top:119px;width:15px;height:501px;border:1px solid #8c8c8c;border-radius:2px;background:linear-gradient(90deg,#f4f4f4,#e8e8e8 45%,#cfcfcf)"></div>
<div class="a" style="left:1400px;top:365px;width:8px;height:2px;background:linear-gradient(90deg,#333,#777);box-shadow:0 3px 0 #4a4a4a,0 6px 0 #4a4a4a"></div>
<!-- status bar -->
<div class="a" style="left:1px;top:730px;width:1413px;height:20px;background:#f0ecec;border-radius:0 0 7px 7px"></div>
<div class="t" style="left:5px;top:734px;letter-spacing:-0.06px">Automatische Zeichnungsableitung &gt; Fertigungszeichnung &gt; Verwendungszweckabhängig &gt; DEFAULT &gt; Ansichtsgruppe</div>
</body></html>
